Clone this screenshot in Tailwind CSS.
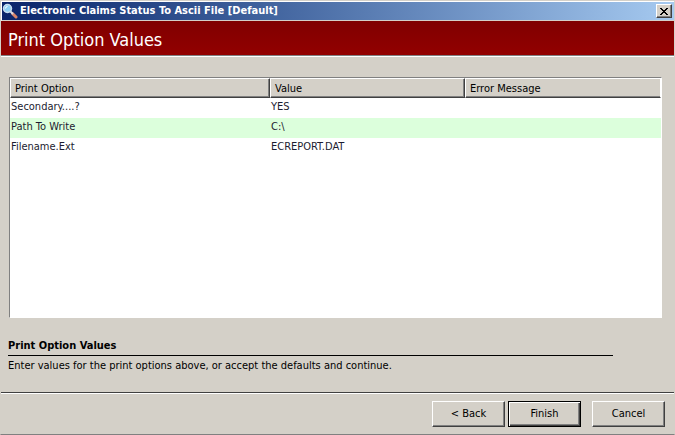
<!DOCTYPE html>
<html lang="en">
<head>
  <meta charset="UTF-8">
  <meta name="viewport" content="width=device-width, initial-scale=1.0">
  <title>Electronic Claims Status To Ascii File</title>
  <script src="https://cdn.jsdelivr.net/npm/@tailwindcss/browser@4"></script>
</head>
<body class="bg-[#d4d0c8] text-black font-['DejaVu_Sans_Condensed','DejaVu_Sans',sans-serif] text-[11px] leading-4">
  <div class="min-h-screen flex flex-col border border-[#d4d0c8] border-b-[#808080]">

    <!-- Title bar -->
    <header class="h-5 flex items-center border-t border-l border-b border-white border-b-[#d4d0c8] bg-linear-to-r from-[#0a246a] to-[#a6caf0] text-white pr-0.5">
      <svg class="size-4 shrink-0" viewBox="0 0 16 16" aria-hidden="true">
        <path d="M10.500 10.500l3.500 3.500" stroke="#d98468" stroke-width="3" stroke-linecap="round"/>
        <path d="M8.500 8.500l2.500 2.500" stroke="#d8dce4" stroke-width="2"/>
        <circle cx="5.500" cy="5.500" r="4" fill="#8fd0f4" stroke="#c8dcec" stroke-width="1.500"/>
        <path d="M3.500 5.500a2 2 0 0 1 2-2" fill="none" stroke="#fff"/>
      </svg>
      <h1 class="grow pl-0.5 font-bold whitespace-nowrap">Electronic Claims Status To Ascii File [Default]</h1>
      <button type="button" aria-label="Close" class="w-4 h-3.5 flex items-center justify-center bg-[#d4d0c8] border border-white border-r-[#404040] border-b-[#404040] shadow-[inset_-1px_-1px_#808080]">
        <svg class="w-2 h-[7px]" viewBox="0 0 8 7" shape-rendering="crispEdges" aria-hidden="true">
          <path d="M0 0h2v1h1v1h2v-1h1v-1h2v1h-1v1h-1v1h-1v1h1v1h1v1h1v1h-2v-1h-1v-1h-2v1h-1v1h-2v-1h1v-1h1v-1h1v-1h-1v-1h-1v-1h-1z" fill="#000"/>
        </svg>
      </button>
    </header>

    <!-- Banner -->
    <div class="h-9 flex items-center bg-linear-to-b from-[#800000] to-[#930000] text-white pl-[7px] pt-0.5 border-b border-white shadow-[inset_0_-1px_#808080]">
      <h2 class="text-lg leading-5">Print Option Values</h2>
    </div>

    <main class="grow flex flex-col">
      <!-- Option list -->
      <div class="grow mt-5 ml-2 mr-3 bg-white border border-[#808080] border-r-white border-b-white">
        <table class="w-full table-fixed border-separate border-spacing-0 text-left">
          <colgroup>
            <col class="w-[260px]">
            <col class="w-[195px]">
            <col>
          </colgroup>
          <thead class="bg-[#d4d0c8]">
            <tr class="h-5">
              <th scope="col" class="p-0 pl-1 pt-px font-normal border border-white border-r-[#404040] border-b-[#404040] shadow-[inset_-1px_-1px_#808080]">Print Option</th>
              <th scope="col" class="p-0 pl-1 pt-px font-normal border border-white border-r-[#404040] border-b-[#404040] shadow-[inset_-1px_-1px_#808080]">Value</th>
              <th scope="col" class="p-0 pl-1 pt-px font-normal border border-white border-b-[#404040] shadow-[inset_0_-1px_#808080]">Error Message</th>
            </tr>
          </thead>
          <tbody class="text-[#1c1c30]">
            <tr class="h-5">
              <td class="p-0 pl-px pb-0.5">Secondary....?</td>
              <td class="p-0 pl-px pb-0.5">YES</td>
              <td class="p-0"></td>
            </tr>
            <tr class="h-5 bg-[#dcffdc]">
              <td class="p-0 pl-px pb-0.5">Path To Write</td>
              <td class="p-0 pl-px pb-0.5">C:\</td>
              <td class="p-0"></td>
            </tr>
            <tr class="h-5">
              <td class="p-0 pl-px pb-0.5">Filename.Ext</td>
              <td class="p-0 pl-px pb-0.5">ECREPORT.DAT</td>
              <td class="p-0"></td>
            </tr>
          </tbody>
        </table>
      </div>

      <!-- Description -->
      <section class="mt-5 mb-[18px] pl-[7px]">
        <h3 class="mr-[61px] h-[18px] font-bold border-b border-black">Print Option Values</h3>
        <p class="pt-0.5">Enter values for the print options above, or accept the defaults and continue.</p>
      </section>
    </main>

    <!-- Buttons -->
    <footer class="flex justify-end border-t border-[#404040] shadow-[inset_0_1px_#fff] pt-2 pb-[7px] pr-[9px]">
      <button type="button" class="w-[73px] h-[26px] mr-[3px] bg-[#d4d0c8] border border-white border-r-[#404040] border-b-[#404040] shadow-[inset_-1px_-1px_#808080]">&lt; Back</button>
      <button type="button" class="w-[73px] h-[26px] mr-[11px] bg-[#d4d0c8] border border-black shadow-[inset_1px_1px_#fff,inset_-1px_-1px_#404040,inset_-2px_-2px_#808080]">Finish</button>
      <button type="button" class="w-[73px] h-[26px] bg-[#d4d0c8] border border-white border-r-[#404040] border-b-[#404040] shadow-[inset_-1px_-1px_#808080]">Cancel</button>
    </footer>
  </div>
</body>
</html>
